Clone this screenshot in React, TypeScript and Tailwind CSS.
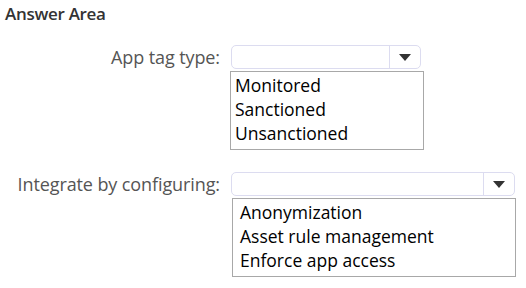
import React from 'react';

const font = { fontFamily: '"Open Sans", "Noto Sans", sans-serif' };

function Caret() {
  return (
    <svg width="12" height="7" viewBox="0 0 12 7">
      <path d="M0 0 H12 L6 7 Z" fill="#333" />
    </svg>
  );
}

function DropdownRow({
  label,
  width,
  listClass,
  options,
}: {
  label: string;
  width: number;
  listClass: string;
  options: string[];
}) {
  return (
    <div className="grid grid-cols-[220px_1fr] gap-x-[11px]">
      <div className="flex h-6 items-center justify-end text-[18px] tracking-[-0.1px] text-[#555] whitespace-nowrap">
        {label}
      </div>
      <div className="flex flex-col" style={{ width }}>
        <div className="flex h-6 rounded-[5px] border border-[#dcdcf0] bg-white">
          <div className="flex-1" />
          <div className="flex w-[31px] items-center justify-center border-l border-[#dcdcf0]">
            <Caret />
          </div>
        </div>
        <div
          className={`mt-[2px] flex h-[79px] flex-col border border-[#a8a8a8] bg-white pt-[1px] text-[17.5px] leading-[24px] text-black ${listClass}`}
        >
          {options.map((o) => (
            <div key={o}>{o}</div>
          ))}
        </div>
      </div>
    </div>
  );
}

export default function App() {
  return (
    <div className="h-[288px] w-[526px] bg-white" style={font}>
      <div className="px-[5px] pt-[2px] text-[17px] font-semibold leading-[24px] tracking-[-0.3px] text-[#333]">
        Answer Area
      </div>
      <div className="mt-[19px]">
        <DropdownRow
          label="App tag type:"
          width={190}
          listClass="-ml-px w-[194px] px-[4px]"
          options={['Monitored', 'Sanctioned', 'Unsanctioned']}
        />
      </div>
      <div className="mt-[22px]">
        <DropdownRow
          label="Integrate by configuring:"
          width={284}
          listClass="ml-px w-[284px] px-[7px]"
          options={['Anonymization', 'Asset rule management', 'Enforce app access']}
        />
      </div>
    </div>
  );
}
